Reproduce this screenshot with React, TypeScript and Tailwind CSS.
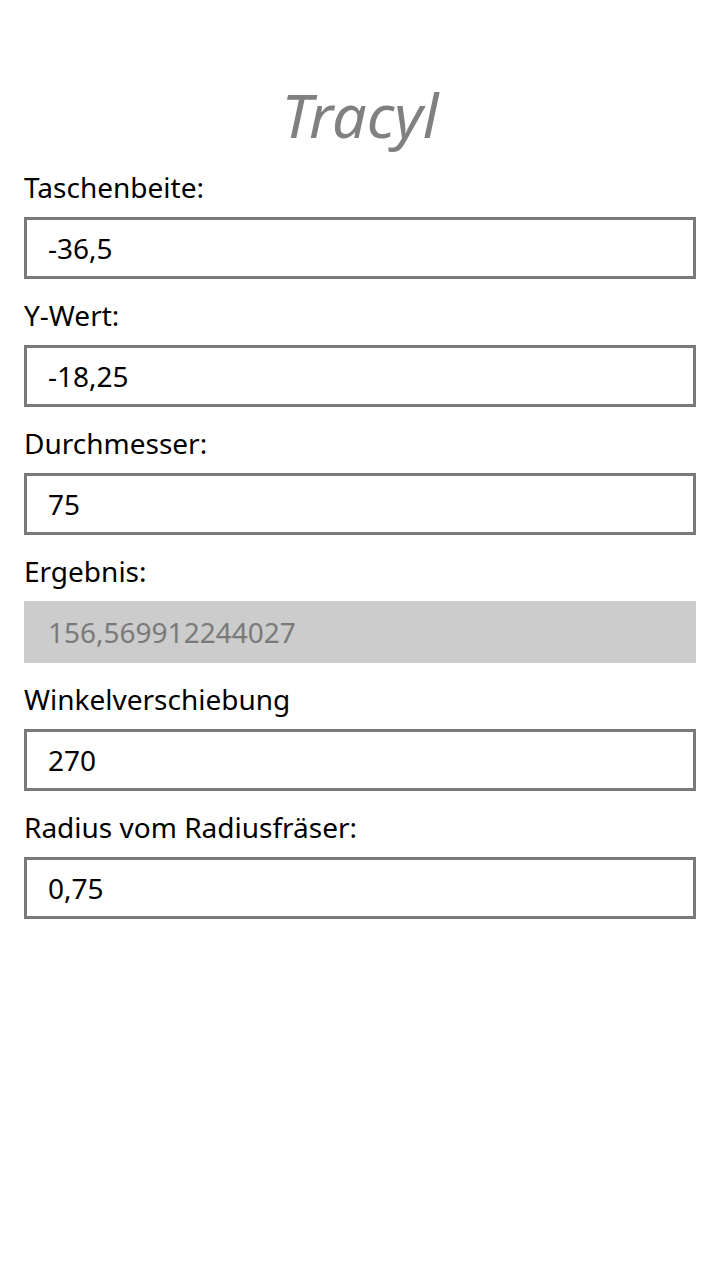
import React from 'react';

const fields = [
  { label: 'Taschenbeite:', value: '-36,5' },
  { label: 'Y-Wert:', value: '-18,25' },
  { label: 'Durchmesser:', value: '75' },
  { label: 'Ergebnis:', value: '156,569912244027', readOnly: true },
  { label: 'Winkelverschiebung', value: '270' },
  { label: 'Radius vom Radiusfräser:', value: '0,75' },
];

export default function App() {
  return (
    <div className="min-h-[1280px] w-[720px] bg-white px-[24px] font-['Noto_Sans',sans-serif]">
      <h1 className="h-[151px] pt-[80px] text-center text-[61px] italic leading-[70px] text-[#808080]">Tracyl</h1>
      {fields.map((f) => (
        <div key={f.label}>
          <div className="mt-[18px] mb-[12px] h-[36px] text-[28px] leading-[36px] text-black">{f.label}</div>
          {f.readOnly ? (
            <div className="flex h-[62px] items-center bg-[#cccccc] px-[24px] text-[28px] text-[#7a7a7a]">{f.value}</div>
          ) : (
            <div className="flex h-[62px] items-center border-[3px] border-[#7a7a7a] px-[21px] text-[28px] text-black">{f.value}</div>
          )}
        </div>
      ))}
    </div>
  );
}
